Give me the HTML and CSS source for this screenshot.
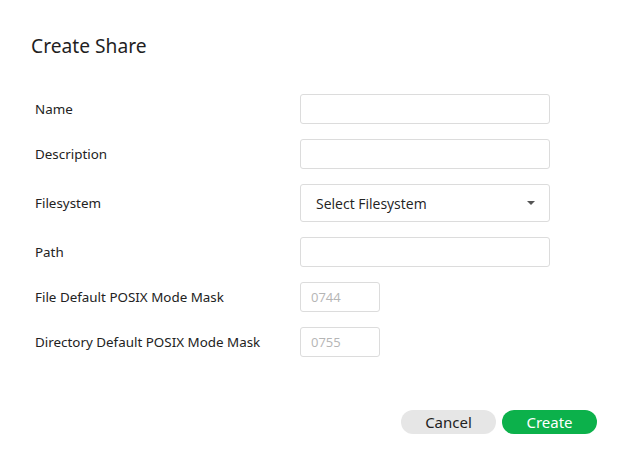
FILE: index.html
```html
<!DOCTYPE html>
<html>
<head>
<meta charset="utf-8">
<link rel="stylesheet" href="styles.css">
</head>
<body>
<div class="dialog">
  <h1 class="title">Create Share</h1>
  <form class="form">
    <div class="row"><label class="label">Name</label><input class="input" type="text"></div>
    <div class="row"><label class="label">Description</label><input class="input" type="text"></div>
    <div class="row row-select"><label class="label">Filesystem</label>
      <div class="select"><span>Select Filesystem</span><span class="caret"></span></div>
    </div>
    <div class="row"><label class="label">Path</label><input class="input" type="text"></div>
    <div class="row"><label class="label">File Default POSIX Mode Mask</label><input class="input small" type="text" placeholder="0744"></div>
    <div class="row"><label class="label">Directory Default POSIX Mode Mask</label><input class="input small" type="text" placeholder="0755"></div>
  </form>
  <div class="actions">
    <button class="btn cancel" type="button">Cancel</button>
    <button class="btn create" type="button">Create</button>
  </div>
</div>
</body>
</html>
```
FILE: styles.css
```css
html, body {
  margin: 0;
  padding: 0;
  background: #fff;
}
body {
  font-family: "Noto Sans", "Open Sans", sans-serif;
  color: #222;
}
.dialog {
  width: 632px;
  height: 468px;
  box-sizing: border-box;
  padding: 32px 35px 0 31px;
}
.title {
  margin: 0;
  font-size: 19.2px;
  font-weight: 400;
  line-height: 28px;
  color: #1f1f1f;
}
.form {
  margin-top: 34px;
  padding-left: 4px;
  display: flex;
  flex-direction: column;
  gap: 15px;
}
.row {
  display: grid;
  grid-template-columns: 265px 250px;
  align-items: center;
}
.label {
  font-size: 13.4px;
  color: #222;
}
.input {
  box-sizing: border-box;
  width: 250px;
  height: 30px;
  border: 1px solid #dcdcdc;
  border-radius: 3px;
  padding: 0 10px;
  font-family: "Open Sans", sans-serif;
  font-size: 13px;
  outline: none;
}
.input.small {
  width: 80px;
}
.input::placeholder {
  color: #b5b5b5;
}
.select {
  box-sizing: border-box;
  height: 38px;
  border: 1px solid #dcdcdc;
  border-radius: 3px;
  padding: 0 14px 0 15px;
  display: flex;
  align-items: center;
  justify-content: space-between;
  font-family: "Open Sans", sans-serif;
  font-size: 14px;
  color: #222;
}
.caret {
  width: 0;
  height: 0;
  border-left: 4px solid transparent;
  border-right: 4px solid transparent;
  border-top: 4px solid #555;
}
.actions {
  margin-top: 53px;
  display: flex;
  justify-content: flex-end;
  gap: 6px;
}
.btn {
  width: 95px;
  height: 24px;
  border: none;
  border-radius: 12px;
  font-family: "Noto Sans", sans-serif;
  font-size: 15px;
  padding: 0;
  line-height: 24px;
}
.cancel {
  background: #e6e6e6;
  color: #222;
}
.create {
  background: #0cb14b;
  color: #fff;
}
```
